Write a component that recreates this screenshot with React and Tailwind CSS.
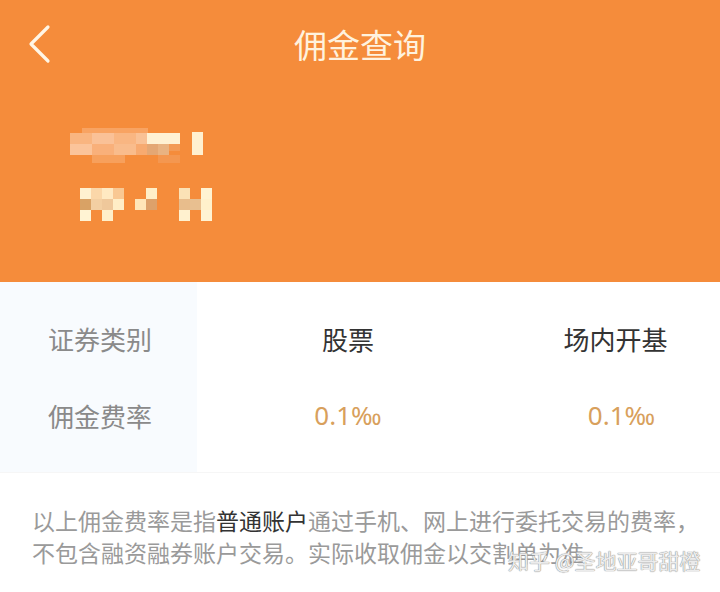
import React from 'react';

const font = { fontFamily: '"Noto Sans CJK SC", "Noto Sans", sans-serif' };

// mosaic cells for the blurred account info: [x, y, w, h, color]
const mosaic = [
  [82, 128, 66, 6, '#f8a362'],
  [70, 133, 22, 11, '#f9b580'],
  [92, 133, 22, 11, '#fac197'],
  [114, 133, 22, 11, '#f9b682'],
  [136, 133, 11, 11, '#f9c195'],
  [147, 133, 33, 11, '#fff1d3'],
  [70, 144, 22, 11, '#fbc49a'],
  [92, 144, 22, 11, '#f9b07a'],
  [114, 144, 22, 11, '#f9bc8c'],
  [136, 144, 11, 11, '#f7aa70'],
  [147, 144, 11, 11, '#e4a774'],
  [158, 144, 11, 11, '#e9b382'],
  [169, 144, 11, 7, '#f39a55'],
  [92, 155, 33, 8, '#f7a05c'],
  [158, 155, 22, 8, '#f49750'],
  [192, 132, 11, 23, '#fff0d0'],
  [80, 188, 11, 11, '#fff1d0'],
  [91, 188, 11, 11, '#fbd7a9'],
  [102, 188, 11, 11, '#ffe9c2'],
  [113, 188, 11, 11, '#f9c893'],
  [146, 188, 11, 11, '#ffefc8'],
  [179, 188, 11, 11, '#fbe2b6'],
  [201, 188, 11, 11, '#fff3d2'],
  [80, 199, 11, 11, '#d9a265'],
  [91, 199, 11, 11, '#f3cfa2'],
  [102, 199, 11, 11, '#efc89b'],
  [113, 199, 11, 11, '#ffedc6'],
  [135, 199, 11, 11, '#ffe6b8'],
  [146, 199, 11, 11, '#dda16a'],
  [179, 199, 11, 11, '#e8bd8c'],
  [190, 199, 11, 11, '#e8bf90'],
  [201, 199, 11, 11, '#fff1cc'],
  [80, 210, 11, 11, '#fff3d3'],
  [102, 210, 11, 11, '#ffefc9'],
  [179, 210, 11, 11, '#fff1cf'],
  [201, 210, 11, 11, '#fff3d3'],
];

export default function App() {
  return (
    <div className="w-[720px] h-[592px] bg-white relative overflow-hidden" style={font}>
      <div className="h-[282px] bg-[#f58c3b] relative">
        <div className="h-[90px] flex items-center justify-center relative">
          <svg className="absolute left-[26px] top-[24px]" width="26" height="40" viewBox="0 0 26 40">
            <path d="M22 3 L5 20 L22 37" fill="none" stroke="#fff6e6" strokeWidth="3.2" strokeLinecap="round" strokeLinejoin="round" />
          </svg>
          <div className="text-[33px] text-[#fff2de] leading-none -mt-[2px]">佣金查询</div>
        </div>
        <svg className="absolute left-0 top-0" width="260" height="282" viewBox="0 0 260 282">
          {mosaic.map(([x, y, w, h, c], i) => (
            <rect key={i} x={x} y={y} width={w} height={h} fill={c} />
          ))}
        </svg>
      </div>

      <div className="flex h-[191px] border-b border-[#f6f6f6]">
        <div className="w-[197px] bg-[#f8fbfe] pt-[18px]">
          <div className="h-[77px] flex items-center pl-[48px] text-[26px] text-[#8a8a8a]">证券类别</div>
          <div className="h-[77px] flex items-center pl-[48px] text-[26px] text-[#8a8a8a]">佣金费率</div>
        </div>
        <div className="w-[302px] pt-[18px]">
          <div className="h-[77px] flex items-center justify-center text-[26px] text-[#333333]">股票</div>
          <div className="h-[77px] flex items-center justify-center text-[26px] text-[#d8a05c]" style={{ fontFamily: '"Noto Sans", sans-serif' }}>0.1‰</div>
        </div>
        <div className="flex-1 pt-[18px] pl-[12px]">
          <div className="h-[77px] flex items-center justify-center text-[26px] text-[#333333]">场内开基</div>
          <div className="h-[77px] flex items-center justify-center pl-[12px] text-[26px] text-[#d8a05c]" style={{ fontFamily: '"Noto Sans", sans-serif' }}>0.1‰</div>
        </div>
      </div>

      <div className="px-[32px] pt-[31px] text-[23px] leading-[32px] text-[#9a9a9a] whitespace-nowrap">
        <div>以上佣金费率是指<span className="text-[#333333]">普通账户</span>通过手机、网上进行委托交易的费率，</div>
        <div>不包含融资融券账户交易。实际收取佣金以交割单为准</div>
      </div>

      <div
        className="absolute left-[508px] top-[545px] text-[21px] leading-[30px] text-[#ececec] whitespace-nowrap"
        style={{ textShadow: '0 0 1px #8c8c8c, 0 0 1px #8c8c8c' }}
      >
        知乎 @圣地亚哥甜橙
      </div>
    </div>
  );
}
